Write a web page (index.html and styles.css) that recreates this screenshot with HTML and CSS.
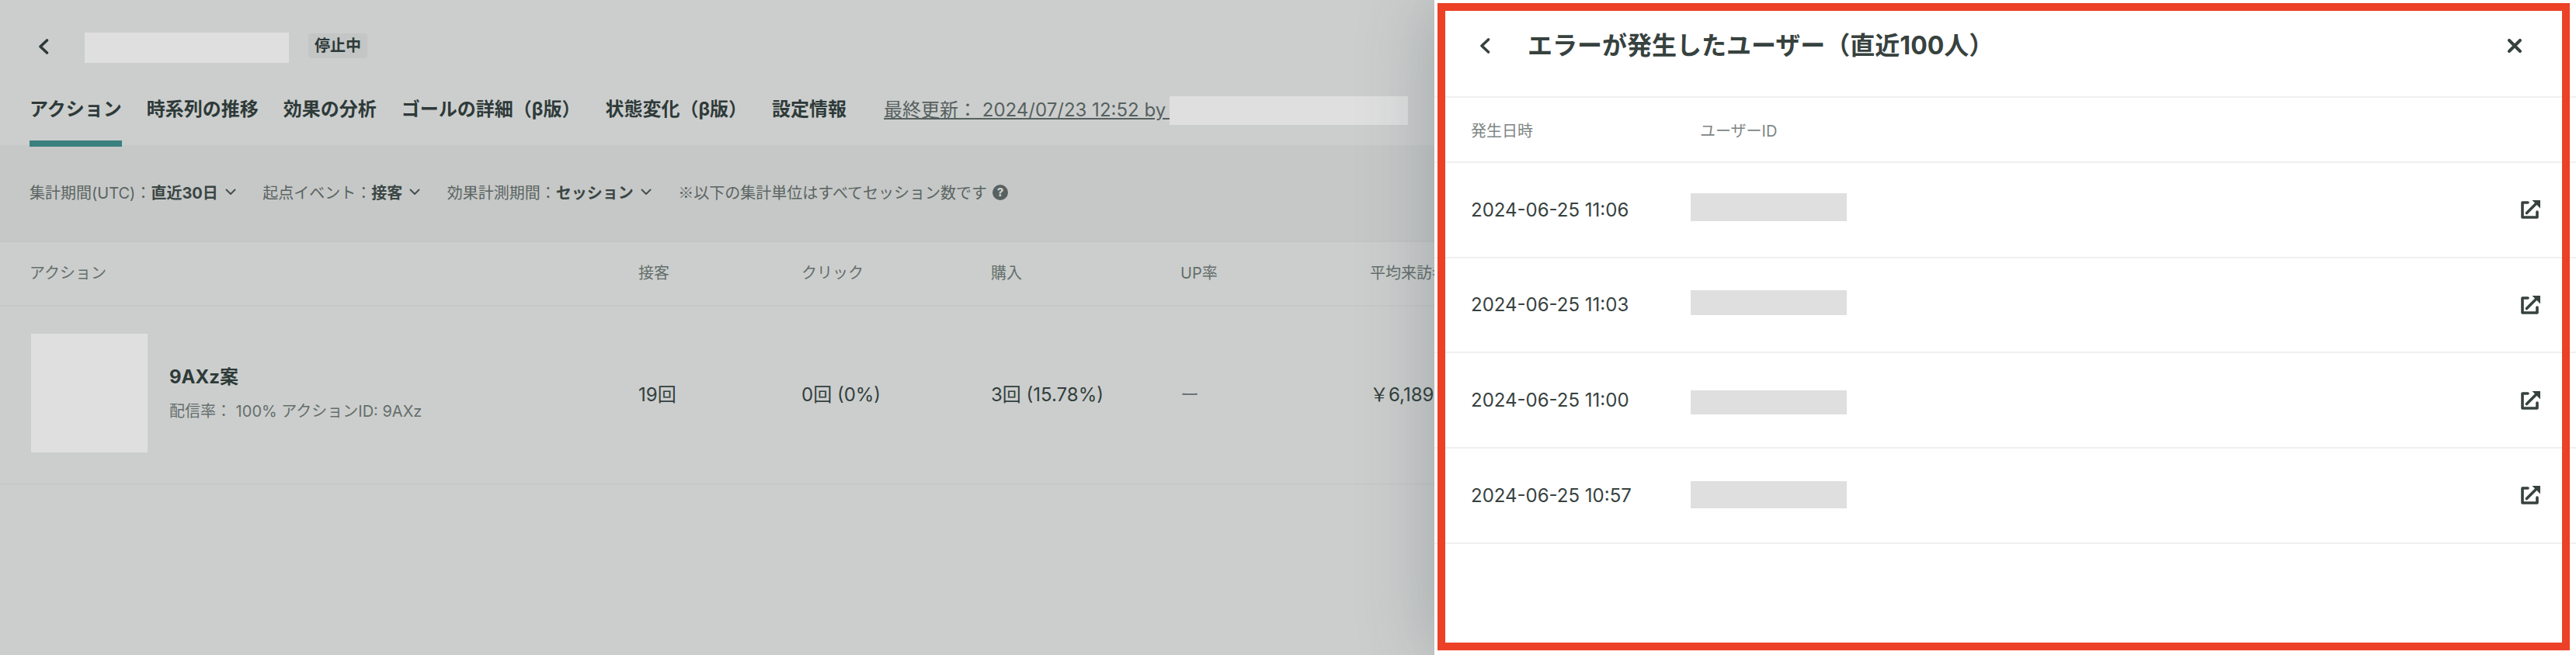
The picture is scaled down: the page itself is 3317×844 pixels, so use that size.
FILE: index.html
```html
<!DOCTYPE html>
<html lang="ja">
<head>
<meta charset="utf-8">
<title>アクション</title>
<link rel="stylesheet" href="styles.css">
</head>
<body>
<div class="page">
  <header class="top">
    <svg class="chev" viewBox="0 0 14 20"><polyline points="11.5,2 3,10 11.5,18"/></svg>
    <div class="redact redact-title"></div>
    <span class="badge">停止中</span>
  </header>
  <nav class="tabs">
    <a class="tab tab-active">アクション</a>
    <a class="tab">時系列の推移</a>
    <a class="tab">効果の分析</a>
    <a class="tab">ゴールの詳細（β版）</a>
    <a class="tab">状態変化（β版）</a>
    <a class="tab">設定情報</a>
    <div class="updated"><span class="updated-text">最終更新： 2024/07/23 12:52 by&nbsp;</span><div class="redact redact-user"></div></div>
  </nav>
  <section class="filters">
    <div class="filter"><span>集計期間(UTC)：<b>直近30日</b></span><svg class="mini" viewBox="0 0 14 9"><polyline points="1.5,1.5 7,7 12.5,1.5"/></svg></div>
    <div class="filter"><span>起点イベント：<b>接客</b></span><svg class="mini" viewBox="0 0 14 9"><polyline points="1.5,1.5 7,7 12.5,1.5"/></svg></div>
    <div class="filter"><span>効果計測期間：<b>セッション</b></span><svg class="mini" viewBox="0 0 14 9"><polyline points="1.5,1.5 7,7 12.5,1.5"/></svg></div>
    <div class="filter"><span class="note">※以下の集計単位はすべてセッション数です</span><span class="help">?</span></div>
  </section>
  <section class="table">
    <div class="grid grid-head">
      <div>アクション</div><div>接客</div><div>クリック</div><div>購入</div><div>UP率</div><div>平均来訪者単価</div>
    </div>
    <div class="grid grid-row">
      <div class="action">
        <div class="redact thumb"></div>
        <div class="action-text">
          <div class="action-name">9AXz案</div>
          <div class="action-sub">配信率： 100% アクションID: 9AXz</div>
        </div>
      </div>
      <div>19回</div><div>0回 (0%)</div><div>3回 (15.78%)</div><div class="dash">ー</div><div>￥6,189</div>
    </div>
  </section>

  <aside class="panel">
    <div class="panel-head">
      <svg class="chev chev-panel" viewBox="0 0 14 20"><polyline points="11.5,2 3,10 11.5,18"/></svg>
      <h2 class="panel-title">エラーが発生したユーザー（直近100人）</h2>
      <svg class="close" viewBox="0 0 18 18"><path d="M2 2 16 16M16 2 2 16"/></svg>
    </div>
    <div class="plist plist-head"><div class="date">発生日時</div><div class="uid-label">ユーザーID</div></div>
    <div class="plist plist-row"><div class="date">2024-06-25 11:06</div><div class="redact uid uid-1"></div><svg class="ext" viewBox="0 0 25 24"><path class="ext-line" d="M9 3H2V22H21V15M7.5 16.5 20 4"/><path class="ext-head" d="M14.5 0H25V10.5Z"/></svg></div>
    <div class="plist plist-row"><div class="date">2024-06-25 11:03</div><div class="redact uid uid-2"></div><svg class="ext" viewBox="0 0 25 24"><path class="ext-line" d="M9 3H2V22H21V15M7.5 16.5 20 4"/><path class="ext-head" d="M14.5 0H25V10.5Z"/></svg></div>
    <div class="plist plist-row"><div class="date">2024-06-25 11:00</div><div class="redact uid uid-3"></div><svg class="ext" viewBox="0 0 25 24"><path class="ext-line" d="M9 3H2V22H21V15M7.5 16.5 20 4"/><path class="ext-head" d="M14.5 0H25V10.5Z"/></svg></div>
    <div class="plist plist-row"><div class="date">2024-06-25 10:57</div><div class="redact uid uid-4"></div><svg class="ext" viewBox="0 0 25 24"><path class="ext-line" d="M9 3H2V22H21V15M7.5 16.5 20 4"/><path class="ext-head" d="M14.5 0H25V10.5Z"/></svg></div>
    <div class="annotation"></div>
  </aside>
</div>
</body>
</html>
```
FILE: styles.css
```css
* { box-sizing: border-box; }
html, body { margin: 0; height: 100%; }
body {
  font-family: "Inter", "Noto Sans CJK JP", sans-serif;
  color: #3a4644;
  background: #cccecd;
  overflow: hidden;
}
.page { position: relative; width: 3317px; height: 844px; overflow: hidden; background: #cccecd; }

.redact { background: #dfdfdf; flex: none; }

.top { display: flex; align-items: center; height: 82px; padding: 42px 0 0 49px; }
.chev { width: 14px; height: 20px; flex: none; fill: none; stroke: #2e3a39; stroke-width: 3.6; stroke-linecap: round; stroke-linejoin: round; }
.top .chev { margin-top: -4px; }
.redact-title { width: 263px; height: 39px; margin: -1px 0 0 46px; }
.badge { margin: -7px 0 0 25px; width: 76px; height: 32px; line-height: 32px; text-align: center; font-size: 20px; font-weight: 700; background: #c3c6c5; color: #2e3a39; border-radius: 4px; }

.tabs { display: flex; gap: 32px; height: 107px; padding: 0 0 0 38px; border-bottom: 2px solid #c6c8c7; }
.tab { position: relative; height: 105px; padding-top: 41px; font-size: 24px; line-height: 36px; font-weight: 700; color: #2e3a39; white-space: nowrap; }
.tab-active::after { content: ""; position: absolute; left: 0; right: 0; bottom: -2px; height: 8px; background: #3a807e; }
.updated { display: flex; align-items: flex-start; margin: 42px 0 0 16px; height: 37px; }
.updated-text { font-size: 24px; line-height: 36px; color: #56615f; text-decoration: underline; white-space: pre; }
.redact-user { width: 307px; height: 37px; margin-left: -2px; }

.filters { display: flex; align-items: center; gap: 34.5px; height: 123px; padding: 0 0 4px 38px; background: #c6c8c7; font-size: 20px; color: #5a6462; border-bottom: 2px solid #c3c5c4; }
.filter { display: flex; align-items: center; gap: 9px; white-space: nowrap; }
.filter b { font-weight: 700; color: #3a4644; }
.note { font-family: "Noto Sans CJK JP", sans-serif; }
.mini { width: 14px; height: 9px; fill: none; stroke: #45504e; stroke-width: 2; stroke-linecap: round; stroke-linejoin: round; }
.help { width: 20px; height: 20px; border-radius: 50%; background: #566160; color: #cccecd; font-size: 15px; font-weight: 800; line-height: 20px; text-align: center; margin-left: -2px; }

.grid { display: grid; grid-template-columns: 784px 210px 244px 244px 244px 1fr; padding-left: 38px; align-items: center; white-space: nowrap; }
.grid-head { height: 83px; padding-bottom: 4px; font-size: 20px; color: #646e6c; border-bottom: 2px solid #c6c8c7; }
.grid-row { height: 230px; padding-bottom: 6px; font-size: 24px; color: #323f3d; border-bottom: 2px solid #c6c8c7; }
.dash { color: #6a7472; }
.action { display: flex; align-items: center; gap: 28px; padding-left: 2px; }
.thumb { width: 150px; height: 153px; }
.action-name { font-size: 24px; font-weight: 700; line-height: 36px; color: #2e3a39; }
.action-sub { font-size: 20px; line-height: 30px; color: #646e6c; margin-top: 11px; }

.panel { position: absolute; left: 1847px; top: 0; right: 0; bottom: 0; background: #fff; box-shadow: 0 0 90px rgba(50, 70, 75, .3); }
.panel-head { display: flex; align-items: center; height: 126px; padding: 0 70px 6px 58px; border-bottom: 2px solid #f0f0f0; }
.chev-panel { stroke: #37423f; }
.panel-title { flex: 1; margin: 0 0 0 48px; font-size: 32px; font-weight: 700; line-height: 40px; color: #37423f; white-space: nowrap; }
.close { width: 18px; height: 18px; fill: none; stroke: #37423f; stroke-width: 4; stroke-linecap: round; }

.plist { display: flex; align-items: center; padding-left: 47px; white-space: nowrap; }
.date { width: 283px; flex: none; }
.plist-head { height: 84px; font-size: 20px; color: #7e8685; border-bottom: 2px solid #f0f0f0; }
.plist-head .date { width: 295px; }
.plist-row { height: 122.67px; font-size: 24px; color: #37423f; border-bottom: 2px solid #f0f0f0; }
.uid { width: 201px; }
.uid-1 { height: 36px; margin-top: -6px; }
.uid-2 { height: 32px; margin-top: -5px; }
.uid-3 { height: 31px; margin-top: 5px; }
.uid-4 { height: 35px; margin-top: -2px; }
.ext { width: 25px; height: 24px; margin-left: auto; margin-right: 46px; }
.ext-line { fill: none; stroke: #37423f; stroke-width: 3.6; stroke-linecap: round; stroke-linejoin: round; }
.ext-head { fill: #37423f; }

.annotation { position: absolute; left: 4px; top: 4px; width: 1458px; height: 834px; border: 10px solid #ec4126; pointer-events: none; }
```
